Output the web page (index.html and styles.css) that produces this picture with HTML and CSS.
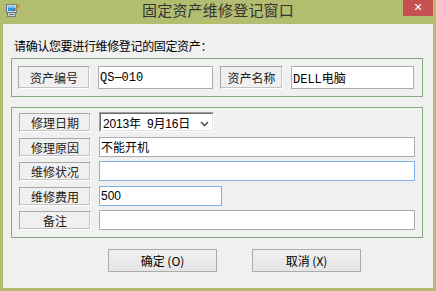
FILE: index.html
```html
<!DOCTYPE html>
<html lang="zh-CN">
<head>
    <meta charset="UTF-8">
    <meta name="viewport" content="width=device-width, initial-scale=1.0">
    <title>固定资产维修登记窗口</title>
    <link rel="stylesheet" href="styles.css">
</head>
<body>
    <div class="window">
        <div class="titlebar">
            <div class="title-left">
                <svg class="app-icon" width="14" height="15" viewBox="0 0 14 15">
                    <rect x="0.5" y="2.5" width="10" height="8" fill="#d8dde0" stroke="#6f7b82"/>
                    <rect x="2" y="4" width="7" height="5" fill="#2f8fe0"/>
                    <rect x="2" y="4" width="7" height="2" fill="#7cc0f2"/>
                    <rect x="1.5" y="10.5" width="8" height="4" fill="#c9ced2" stroke="#6f7b82"/>
                    <rect x="3" y="12" width="5" height="1" fill="#6f7b82"/>
                    <path d="M8 8 L13 2.5 L14 3.5 L9 9 Z" fill="#f2a23a" stroke="#9a5a10" stroke-width="0.5"/>
                    <path d="M8 8 L9 9 L7.5 9.5 Z" fill="#333"/>
                </svg>
            </div>
            <div class="title-text">固定资产维修登记窗口</div>
            <div class="title-right">
                <div class="close-btn">✕</div>
            </div>
        </div>

        <div class="client">
            <div class="prompt">请确认您要进行维修登记的固定资产：</div>

            <div class="group group-asset">
                <div class="field-label">资产编号</div>
                <div class="text-box mono w-code">QS—010</div>
                <div class="field-label w-name-label">资产名称</div>
                <div class="text-box mono w-name">DELL电脑</div>
            </div>

            <div class="group group-repair">
                <div class="form-row">
                    <div class="field-label">修理日期</div>
                    <div class="date-picker">
                        <div class="date-inner">
                            <span class="date-text">2013年&nbsp;&nbsp;9月16日</span>
                            <svg class="chevron" width="9" height="6" viewBox="0 0 9 6">
                                <path d="M1 1 L4.5 4.5 L8 1" fill="none" stroke="#555" stroke-width="1.6"/>
                            </svg>
                        </div>
                    </div>
                </div>
                <div class="form-row">
                    <div class="field-label">修理原因</div>
                    <div class="text-box wide">不能开机</div>
                </div>
                <div class="form-row">
                    <div class="field-label">维修状况</div>
                    <div class="text-box wide focused"></div>
                </div>
                <div class="form-row">
                    <div class="field-label">维修费用</div>
                    <div class="text-box focused w-cost">500</div>
                </div>
                <div class="form-row">
                    <div class="field-label">备注</div>
                    <div class="text-box wide"></div>
                </div>
            </div>

            <div class="buttons">
                <button class="btn">确定 (O)</button>
                <button class="btn">取消 (X)</button>
            </div>
        </div>
    </div>
</body>
</html>
```

FILE: styles.css
```css
* {
    box-sizing: border-box;
    margin: 0;
    padding: 0;
}

body {
    font-family: 'Noto Sans CJK SC', sans-serif;
    font-size: 12px;
    color: #000;
    background: #b2bd70;
}

.window {
    width: 436px;
    height: 291px;
    background: #b2bd70;
    display: flex;
    flex-direction: column;
}

.titlebar {
    height: 24px;
    display: grid;
    grid-template-columns: 1fr auto 1fr;
}

.app-icon {
    display: block;
    margin: 2px 0 0 6px;
}

.title-text {
    font-size: 15px;
    line-height: 20px;
    color: #333;
    letter-spacing: 0.2px;
}

.title-right {
    display: flex;
    justify-content: flex-end;
}

.close-btn {
    width: 30px;
    height: 16px;
    margin-right: 3px;
    background: #c75050;
    color: #fff;
    font-family: 'DejaVu Sans', sans-serif;
    font-weight: bold;
    font-size: 11px;
    line-height: 16px;
    text-align: center;
}

.client {
    flex: 1;
    margin: 0 3px 3px;
    background: #f0f0f0;
    padding: 15px 10px 0 8px;
}

.prompt {
    line-height: 14px;
    margin-left: 3px;
    letter-spacing: -0.35px;
}

.group {
    border: 1px solid #86a883;
}

.group-asset {
    margin-top: 5px;
    height: 39px;
    padding: 7px 0 0 6px;
    display: flex;
    gap: 7px;
}

.field-label {
    width: 72px;
    height: 23px;
    flex: none;
    border: 1px solid #a8a8a8;
    border-right-color: #fff;
    border-bottom-color: #fff;
    box-shadow: inset -1px -1px 0 #c4c4c4;
    display: flex;
    align-items: center;
    justify-content: center;
    color: #222;
}

.group-asset .field-label + .text-box {
    margin-left: 1px;
}

.text-box {
    height: 23px;
    background: #fff;
    border: 1px solid #abadb3;
    padding-left: 1px;
    display: flex;
    align-items: center;
    flex: none;
}

.mono {
    font-family: 'Liberation Mono', 'Noto Sans CJK SC', monospace;
}

.w-code {
    width: 115px;
}

.w-name-label {
    width: 63px;
}

.w-name {
    width: 123px;
}

.group-repair {
    margin-top: 10px;
    height: 131px;
    padding: 4px 7px 0;
    display: flex;
    flex-direction: column;
    gap: 4.5px;
}

.form-row {
    display: flex;
    gap: 8px;
    height: 20px;
}

.form-row .field-label,
.form-row .text-box {
    height: 20px;
}

.form-row .field-label {
    margin-top: 1px;
    height: 19px;
}

.text-box.wide {
    flex: 1;
}

.text-box.focused {
    border-color: #7eb4ea;
}

.w-cost {
    width: 123px;
    font-family: 'Liberation Sans', 'Noto Sans CJK SC', sans-serif;
}

.date-picker {
    width: 115px;
    height: 20px;
    border: 1px solid #a0a0a0;
    border-right-color: #fff;
    border-bottom-color: #fff;
}

.date-inner {
    height: 100%;
    background: #fff;
    border: 1px solid #696969;
    border-right-color: #e3e3e3;
    border-bottom-color: #e3e3e3;
    display: flex;
    align-items: center;
    justify-content: space-between;
    padding: 0 3px 0 2px;
    font-family: 'Liberation Sans', 'Noto Sans CJK SC', sans-serif;
    font-size: 12px;
    letter-spacing: -0.2px;
}

.chevron {
    display: block;
    margin-top: 3px;
}

.buttons {
    display: flex;
    gap: 35px;
    margin: 11px 0 0 97px;
}

.btn {
    width: 109px;
    height: 23px;
    border: 1px solid #acacac;
    background: linear-gradient(#f0f0f0, #e5e5e5);
    font-family: 'Noto Sans CJK SC', sans-serif;
    font-size: 12px;
    color: #000;
}
```
